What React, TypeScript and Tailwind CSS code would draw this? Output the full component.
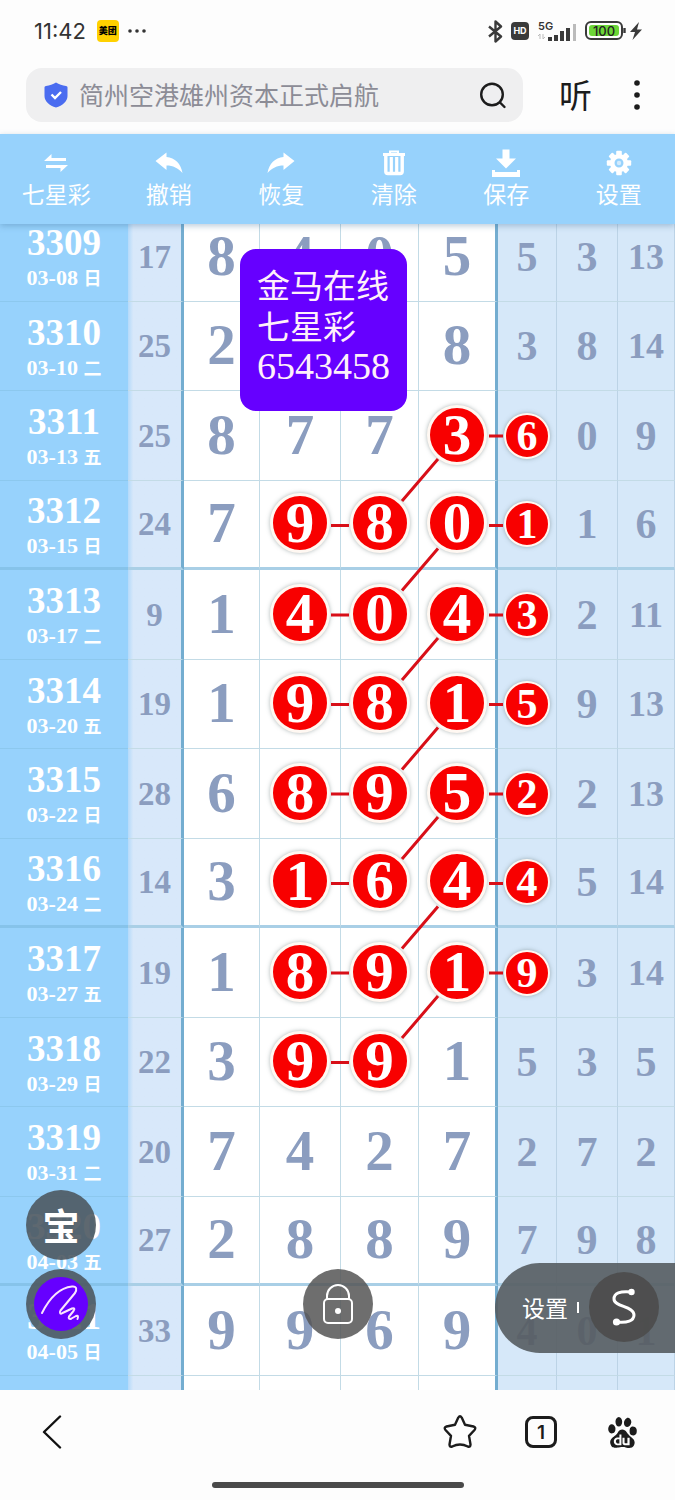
import { SiBaidu } from "react-icons/si";

type Draw = {
  no: string;
  date: string;
  day: string;
  sum: number;
  main: (number | null)[];
  side: number[];
  // indexes of the circled numbers, 0-3 for main and 4 for the first side column
  marks: number[];
};

const draws: Draw[] = [
  { no: "3309", date: "03-08", day: "日", sum: 17, main: [8, 4, 0, 5], side: [5, 3, 13], marks: [] },
  { no: "3310", date: "03-10", day: "二", sum: 25, main: [2, null, null, 8], side: [3, 8, 14], marks: [] },
  { no: "3311", date: "03-13", day: "五", sum: 25, main: [8, 7, 7, 3], side: [6, 0, 9], marks: [3, 4] },
  { no: "3312", date: "03-15", day: "日", sum: 24, main: [7, 9, 8, 0], side: [1, 1, 6], marks: [1, 2, 3, 4] },
  { no: "3313", date: "03-17", day: "二", sum: 9, main: [1, 4, 0, 4], side: [3, 2, 11], marks: [1, 2, 3, 4] },
  { no: "3314", date: "03-20", day: "五", sum: 19, main: [1, 9, 8, 1], side: [5, 9, 13], marks: [1, 2, 3, 4] },
  { no: "3315", date: "03-22", day: "日", sum: 28, main: [6, 8, 9, 5], side: [2, 2, 13], marks: [1, 2, 3, 4] },
  { no: "3316", date: "03-24", day: "二", sum: 14, main: [3, 1, 6, 4], side: [4, 5, 14], marks: [1, 2, 3, 4] },
  { no: "3317", date: "03-27", day: "五", sum: 19, main: [1, 8, 9, 1], side: [9, 3, 14], marks: [1, 2, 3, 4] },
  { no: "3318", date: "03-29", day: "日", sum: 22, main: [3, 9, 9, 1], side: [5, 3, 5], marks: [1, 2] },
  { no: "3319", date: "03-31", day: "二", sum: 20, main: [7, 4, 2, 7], side: [2, 7, 2], marks: [] },
  { no: "3320", date: "04-03", day: "五", sum: 27, main: [2, 8, 8, 9], side: [7, 9, 8], marks: [] },
  { no: "3321", date: "04-05", day: "日", sum: 33, main: [9, 9, 6, 9], side: [4, 0, 1], marks: [] },
];

const links = [0, 1, 2, 3, 4, 5, 6];

function StatusBar() {
  return (
    <div className="flex h-[62px] items-center pl-[34px] pr-[33px] text-[#333]">
      <span className="font-['Inter',sans-serif] text-[22px]">11:42</span>
      <span className="ml-[11px] flex h-[22px] w-[22px] items-center justify-center rounded bg-[#ffd100] text-[9px] font-black text-black">
        美团
      </span>
      <svg className="ml-2" width="20" height="6" viewBox="0 0 20 6" fill="#333">
        <circle cx="3" cy="3" r="1.8" />
        <circle cx="10" cy="3" r="1.8" />
        <circle cx="17" cy="3" r="1.8" />
      </svg>
      <div className="ml-auto flex items-center">
        <svg width="15" height="23" viewBox="0 0 15 23" fill="none" stroke="#3a3a3a" strokeWidth="2.400" strokeLinejoin="round">
          <path d="M1 6.500 13 16.500 7.500 21.500V1.500L13 6.500 1 16.500" />
        </svg>
        <span className="ml-2 flex h-[18px] w-[18px] items-center justify-center rounded bg-[#3a3a3a] font-['Inter',sans-serif] text-[9px] font-bold text-white">
          HD
        </span>
        <svg className="ml-2" width="40" height="22" viewBox="0 0 40 22">
          <text x="1" y="10" fontSize="11" fontWeight="600" fontFamily="Inter, sans-serif" fill="#333">
            5G
          </text>
          <path d="M3 19v-5l-2 2M6 14v5l2-2" fill="none" stroke="#bbb" strokeWidth="1" />
          <path d="M11 17h4v4h-4zM17 15h4v6h-4zM23 11h4v10h-4zM29 8h4v13h-4z" fill="#3a3a3a" />
          <path d="M36 4h3v17h-3z" fill="#bbb" />
        </svg>
        <svg className="ml-2" width="42" height="20" viewBox="0 0 42 20">
          <rect x="1" y="1" width="36" height="17" rx="5" fill="#fff" stroke="#3a3a3a" strokeWidth="2" />
          <rect x="4" y="4" width="30" height="11" rx="3" fill="#6cd637" />
          <path d="M39.5 7v5" stroke="#3a3a3a" strokeWidth="2.4" />
          <text x="19" y="14.5" textAnchor="middle" fontSize="13" fontWeight="500" fontFamily="Inter, sans-serif" fill="#222">
            100
          </text>
        </svg>
        <svg className="ml-[3px]" width="12" height="18" viewBox="0 0 12 18" fill="#3a3a3a">
          <path d="M9 0 0 10h5L2.500 18 12 7.500H7z" />
        </svg>
      </div>
    </div>
  );
}

function SearchBar() {
  return (
    <div className="flex items-center pt-[6px] pb-3 pl-[26px] pr-[35px]">
      <label className="flex h-[54px] flex-1 items-center rounded-[16px] bg-[#efeff0] pl-[18px] pr-4">
        <svg width="24" height="26" viewBox="0 0 24 26">
          <path
            d="M12 0.500c3 1.800 6.500 3 10 3.400 1 .2 1.500.8 1.500 1.700V14c0 5.500-5 9.500-11.500 11.500C5.500 23.500.5 19.500.5 14V5.600c0-.9.5-1.500 1.500-1.700 3.500-.4 7-1.600 10-3.400z"
            fill="#4a6cf0"
          />
          <path d="m7.500 12.500 3.500 3.500 6-6" fill="none" stroke="#fff" strokeWidth="2.400" />
        </svg>
        <input
          type="text"
          aria-label="搜索"
          placeholder="简州空港雄州资本正式启航"
          className="ml-[11px] h-9 min-w-0 flex-1 bg-transparent text-[25px] text-[#333] outline-none placeholder:text-[#8c8c96]"
        />
        <button type="button" aria-label="搜索">
          <svg width="28" height="28" viewBox="0 0 28 28" fill="none" stroke="#1c1c1c" strokeWidth="2.400" strokeLinecap="round">
            <circle cx="13" cy="13.500" r="10.800" />
            <path d="m21 21.500 4.500 4.500" />
          </svg>
        </button>
      </label>
      <button type="button" className="ml-9 pb-[2px] text-[33px] leading-9 text-[#1c1c1c]">
        听
      </button>
      <button type="button" aria-label="更多" className="ml-[42px]">
        <svg width="6" height="30" viewBox="0 0 6 30" fill="#1c1c1c">
          <circle cx="3" cy="3" r="2.800" />
          <circle cx="3" cy="15" r="2.800" />
          <circle cx="3" cy="27" r="2.800" />
        </svg>
      </button>
    </div>
  );
}

function UndoIcon({ flip }: { flip?: boolean }) {
  return (
    <svg width="28" height="22" viewBox="0 0 28 22" fill="#fff" className={flip ? "-scale-x-100" : ""}>
      <path d="M0.500 9 11.500 0.500V5C20 6 26 11.500 27.500 21 23 16 18 13.500 11.500 13.500V18z" />
    </svg>
  );
}

function TrashIcon() {
  return (
    <svg width="24" height="26" viewBox="0 0 24 26" fill="none" stroke="#fff">
      <path d="M1 4.500h22" strokeWidth="3" />
      <path d="M8 4V1.500h8V4" strokeWidth="2" />
      <path d="M3.800 6v15.500a2 2 0 0 0 2 2h12.400a2 2 0 0 0 2-2V6" strokeWidth="3.400" />
      <path d="M9.300 7v15M14.700 7v15" strokeWidth="3.200" />
    </svg>
  );
}

function SaveIcon() {
  return (
    <svg width="28" height="28" viewBox="0 0 28 28" fill="#fff">
      <path d="M10.500 0.500h7v9H24L14 19.500 4 9.500h6.500z" />
      <path d="M0 21h3v2h22v-2h3v7H0z" />
    </svg>
  );
}

function GearIcon() {
  const teeth = [0, 45, 90, 135, 180, 225, 270, 315];
  return (
    <svg width="26" height="26" viewBox="0 0 26 26">
      {teeth.map((a) => (
        <rect key={a} x="10.200" y="0.800" width="5.600" height="6" rx="1" fill="#fff" transform={`rotate(${a} 13 13)`} />
      ))}
      <circle cx="13" cy="13" r="6.800" fill="none" stroke="#fff" strokeWidth="4.600" />
      <circle cx="13" cy="13" r="2.200" fill="#d2ebfd" />
    </svg>
  );
}

function SwapIcon() {
  return (
    <svg width="24" height="20" viewBox="0 0 24 20" fill="#fff">
      <path d="M0 8 7.500 1v4H22v3zM24 12l-7.500 7v-4H2v-3z" />
    </svg>
  );
}

function Toolbar() {
  const tools = [
    { label: "七星彩", icon: <SwapIcon /> },
    { label: "撤销", icon: <UndoIcon /> },
    { label: "恢复", icon: <UndoIcon flip /> },
    { label: "清除", icon: <TrashIcon /> },
    { label: "保存", icon: <SaveIcon /> },
    { label: "设置", icon: <GearIcon /> },
  ];
  return (
    <nav className="relative z-10 grid h-[90px] grid-cols-6 bg-[#97d2fc] shadow-[0_2px_6px_rgba(60,110,150,0.35)]">
      {tools.map((t) => (
        <button key={t.label} type="button" className="flex flex-col items-center pt-[14px] text-white">
          <span className="flex h-[30px] items-center">{t.icon}</span>
          <span className="text-[23px] leading-[30px]">{t.label}</span>
        </button>
      ))}
    </nav>
  );
}

function Ball({ n, small }: { n: number | null; small?: boolean }) {
  return (
    <span
      className={
        "mx-auto flex items-center justify-center rounded-full border-[#fff8f2] bg-[#f80000] text-white shadow-[0_0_4px_rgba(90,110,110,0.5)] " +
        (small ? "h-[46px] w-[46px] border-2" : "h-[60px] w-[60px] border-3")
      }
    >
      {n}
    </span>
  );
}

function Chart() {
  return (
    <div className="relative -mt-3">
      <table className="w-full table-fixed border-separate border-spacing-0 text-center font-['Liberation_Serif','Noto_Sans_CJK_SC',serif] font-bold text-[#8b9dbf]">
        <colgroup>
          <col className="w-[128px]" />
          <col className="w-[56px]" />
          <col className="w-[76px]" />
          <col className="w-[81px]" />
          <col className="w-[78px]" />
          <col className="w-[79px]" />
          <col className="w-[59px]" />
          <col className="w-[61px]" />
          <col className="w-[57px]" />
        </colgroup>
        <tbody>
          {draws.map((d, i) => {
            const line = i % 4 === 3 ? "border-b-3 border-b-[#a9cfe6]" : "border-b border-b-[#c3dbe6]";
            return (
              <tr key={d.no} className={i % 2 === 0 ? "h-[90px]" : "h-[89px]"}>
                <th
                  scope="row"
                  className={`bg-[#97d2fc] p-0 pt-1 text-white ${i % 4 === 3 ? "border-b-3 border-b-[#86c3ea]" : "border-b border-b-[#8cc8ee]"}`}
                >
                  <div className="text-[37px] leading-[38px]">{d.no}</div>
                  <div className="text-[22px] leading-[30px]">
                    {d.date} <span className="font-['Noto_Sans_CJK_SC',sans-serif] text-[18px]">{d.day}</span>
                  </div>
                </th>
                <td
                  className={`border-r-3 border-r-[#74add0] bg-[#d8e8fa] bg-linear-to-r from-[#b4dafa] to-[#d8e8fa] to-10% p-0 text-[33px] leading-9 ${line}`}
                >
                  {d.sum}
                </td>
                {d.main.map((n, c) => (
                  <td
                    key={c}
                    className={`p-0 pb-[2px] text-[57px] leading-[60px] ${line} ${c === 3 ? "border-r-3 border-r-[#74add0]" : "border-r border-r-[#c3dbe6]"}`}
                  >
                    {d.marks.includes(c) ? <Ball n={n} /> : n}
                  </td>
                ))}
                {d.side.map((n, c) => (
                  <td
                    key={c}
                    className={`border-r border-r-[#bcd3e6] bg-[#d6e8f9] p-0 leading-[48px] ${line} ${n > 9 ? "text-[36px]" : "text-[42px]"}`}
                  >
                    {c === 0 && d.marks.includes(4) ? <Ball n={n} small /> : n}
                  </td>
                ))}
              </tr>
            );
          })}
          <tr className="h-[14px]">
            <td className="bg-[#97d2fc] p-0"></td>
            <td className="border-r-3 border-r-[#74add0] bg-[#d8e8fa] bg-linear-to-r from-[#b4dafa] to-[#d8e8fa] to-10% p-0"></td>
            <td className="border-r border-r-[#c3dbe6] p-0"></td>
            <td className="border-r border-r-[#c3dbe6] p-0"></td>
            <td className="border-r border-r-[#c3dbe6] p-0"></td>
            <td className="border-r-3 border-r-[#74add0] p-0"></td>
            <td className="border-r border-r-[#bcd3e6] bg-[#d6e8f9] p-0"></td>
            <td className="border-r border-r-[#bcd3e6] bg-[#d6e8f9] p-0"></td>
            <td className="border-r border-r-[#bcd3e6] bg-[#d6e8f9] p-0"></td>
          </tr>
        </tbody>
      </table>
      <svg
        className="pointer-events-none absolute inset-0 h-full w-full"
        viewBox="0 0 675 1178"
        preserveAspectRatio="none"
        stroke="#d80f18"
        strokeWidth="3"
      >
        {links.map((k) => (
          <g key={k} transform={`translate(0 ${k * 89.5})`}>
            <path d="M489 224h14M438 247 402 289M331 313.500h18" />
          </g>
        ))}
      </svg>
    </div>
  );
}

function FloatingTools() {
  return (
    <>
      <div className="absolute top-[25px] left-[240px] rounded-[16px] bg-[#6600ff] px-[17px] pt-[15px] pb-6 text-[33px] leading-[41px] text-[#fff0fa]">
        <p>金马在线</p>
        <p>七星彩</p>
        <p className="font-['Liberation_Serif',serif] text-[38px]">6543458</p>
      </div>

      <button
        type="button"
        className="absolute bottom-[130px] left-[26px] flex h-[70px] w-[70px] items-center justify-center rounded-full bg-[#4c5860]/90 text-[37px] leading-10 font-bold text-white"
      >
        宝
      </button>
      <button
        type="button"
        aria-label="画笔"
        className="absolute bottom-[51px] left-[26px] flex h-[70px] w-[70px] items-center justify-center rounded-full bg-[#4c5860]/90"
      >
        <svg width="54" height="54" viewBox="0 0 54 54">
          <circle cx="27" cy="27" r="27" fill="#6600ff" />
          <path
            d="M8 36C14 24 24 11 38 9.500c5-.5 5 3 3 6.500L26.500 33.500c-1.500 2.500 0 4 2 2.500L38 31.500c2.500-1 3 .5 1.500 2.500L35 39.500c-1 2 .5 3 2.500 2l4.500-2.500c2-1 2.500.5 1.500 3"
            fill="none"
            stroke="#fbe3ff"
            strokeWidth="2"
            strokeLinecap="round"
            strokeLinejoin="round"
          />
        </svg>
      </button>

      <button
        type="button"
        aria-label="锁定"
        className="absolute bottom-[51px] left-1/2 flex h-[70px] w-[70px] -translate-x-1/2 items-center justify-center rounded-full bg-[#555]/85"
      >
        <svg width="32" height="42" viewBox="0 0 32 42" fill="none" stroke="#fff" strokeWidth="2">
          <rect x="2" y="16" width="28" height="24" rx="4" />
          <path d="M5 16v-3a11 11 0 0 1 22 0v3" />
          <circle cx="16" cy="28" r="3" fill="#fff" stroke="none" />
        </svg>
      </button>

      <div className="absolute right-0 bottom-[37px] flex h-[90px] w-[180px] items-center rounded-l-full bg-[#555c61]/90 pr-4 pb-[2px] pl-[27px]">
        <button type="button" className="text-[23px] text-white">
          设置
        </button>
        <span className="ml-[9px] h-[11px] w-[2px] bg-white"></span>
        <button
          type="button"
          aria-label="连线"
          className="ml-auto flex h-[70px] w-[70px] shrink-0 items-center justify-center rounded-full bg-[#4d4d4d]/95"
        >
          <svg width="28" height="40" viewBox="0 0 28 40" fill="none" stroke="#fff" strokeWidth="3">
            <path d="M21 5C10 4 4 6 4 12c0 8 20 7 20 16 0 6-7 8-17 7" />
            <circle cx="21.500" cy="5" r="3.200" fill="#fff" stroke="none" />
            <circle cx="6.500" cy="35" r="3.600" fill="#fff" stroke="none" />
          </svg>
        </button>
      </div>
    </>
  );
}

function BottomNav() {
  return (
    <footer className="bg-[#fdfdfd]">
      <div className="flex h-[84px] items-center pr-[37px] pl-[42px]">
        <button type="button" aria-label="返回">
          <svg width="20" height="34" viewBox="0 0 20 34" fill="none" stroke="#111" strokeWidth="2.400" strokeLinecap="round" strokeLinejoin="round">
            <path d="M18 1.500 2 17l16 15.500" />
          </svg>
        </button>
        <button type="button" aria-label="收藏" className="ml-auto">
          <svg width="34" height="34" viewBox="0 0 34 34" fill="none" stroke="#1c1c1c" strokeWidth="2.400" strokeLinejoin="round">
            <path d="M15.300 2.600Q17 0 18.700 2.600L22 9.800 30.500 11.500Q33.500 12.500 31.500 15L26 20.800 27.500 29.500Q27.500 32.500 24.800 31.500Q17 27.500 9.200 31.500Q6.500 32.500 6.500 29.500L8 20.800 2.500 15Q.5 12.500 3.500 11.500L12 9.800Z" />
          </svg>
        </button>
        <button
          type="button"
          aria-label="窗口 1"
          className="ml-12 flex h-8 w-8 items-center justify-center rounded-lg border-[3px] border-[#1c1c1c] font-['Inter',sans-serif] text-[19px] leading-none font-semibold text-[#1c1c1c]"
        >
          1
        </button>
        <button type="button" aria-label="首页" className="ml-[50px] text-[#1c1c1c]">
          <SiBaidu className="h-[31px] w-[31px]" />
        </button>
      </div>
      <div className="flex h-[26px] justify-center pt-2">
        <div className="h-[6px] w-[252px] rounded-full bg-[#4a4a4a]"></div>
      </div>
    </footer>
  );
}

export default function App() {
  return (
    <div className="flex min-h-screen flex-col bg-[#fdfdfd] font-['Noto_Sans_CJK_SC',sans-serif]">
      <StatusBar />
      <SearchBar />
      <Toolbar />
      <main className="relative overflow-hidden bg-white">
        <Chart />
        <FloatingTools />
      </main>
      <BottomNav />
    </div>
  );
}
